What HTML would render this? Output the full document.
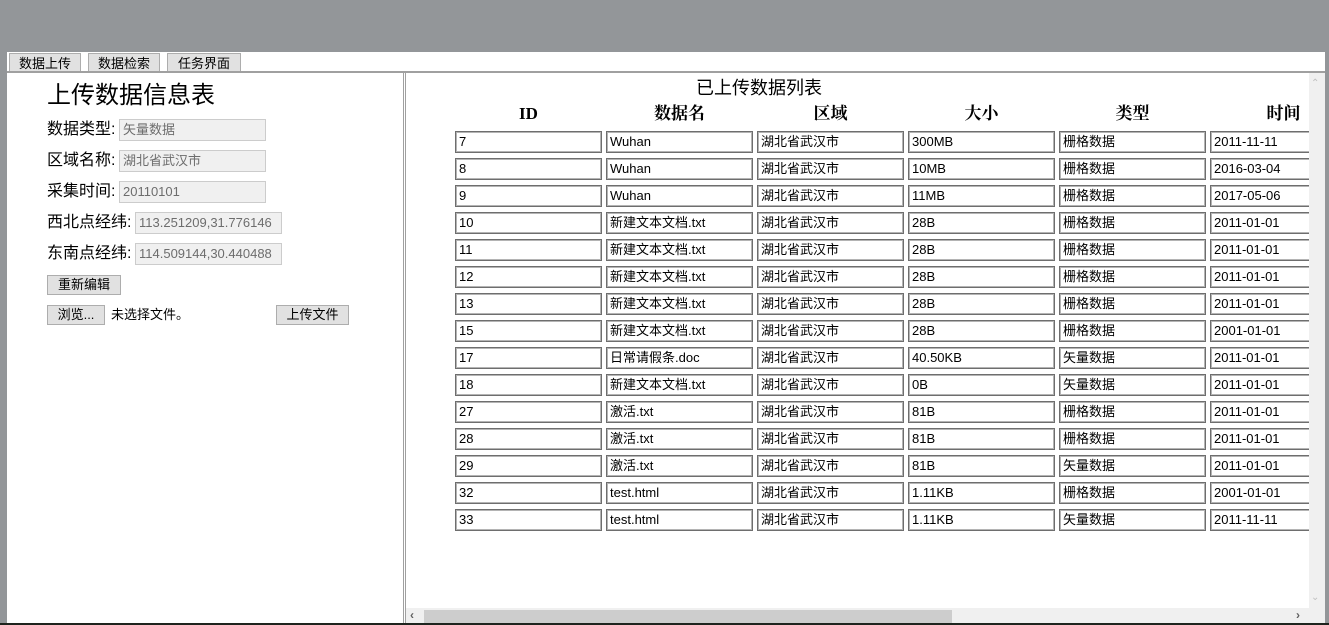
<!DOCTYPE html>
<html><head><meta charset="utf-8"><style>
*{margin:0;padding:0;box-sizing:border-box}
body{width:1329px;height:625px;overflow:hidden;background:#939699;position:relative;font-family:"Liberation Sans","Noto Sans CJK SC",sans-serif;color:#000}
.abs{position:absolute}
.page{left:7px;top:52px;width:1318px;height:571px;background:#fff}
.tab{top:53px;height:20px;background:#e1e1e1;border:1px solid #adadad;border-bottom:none;font-size:13px;line-height:19px;text-align:center}
.lbl{font-size:16px;left:47px;line-height:22px}
.inp{height:22px;background:#f0f0f0;border:1px solid #ccc;font-size:13px;color:#6d6d6d;line-height:20px;padding-left:3px}
.btn{height:20px;background:#e1e1e1;border:1px solid #adadad;font-size:13px;line-height:18px;text-align:center}
.grid{display:grid;grid-template-columns:repeat(6,147px);column-gap:4px;row-gap:5px;grid-auto-rows:22px}
.grid div{border:1px solid #6e6e6e;box-shadow:inset 0 0 0 1px #b4b4b4;font-size:13px;line-height:20px;padding-left:3px;white-space:nowrap;overflow:hidden}
.th{top:103px;font-family:"Liberation Serif","Noto Serif CJK SC",serif;font-weight:bold;font-size:17px;line-height:22px;width:151px;text-align:center}
</style></head><body>
<div class="abs page"></div>
<div class="abs tab" style="left:9px;width:72px">数据上传</div>
<div class="abs tab" style="left:88px;width:72px">数据检索</div>
<div class="abs tab" style="left:167px;width:74px">任务界面</div>
<div class="abs" style="left:7px;top:71px;width:1318px;height:2px;background:#a0a0a0"></div>
<div class="abs" style="left:403px;top:73px;width:1px;height:550px;background:#a0a0a0"></div>
<div class="abs" style="left:405px;top:73px;width:1px;height:550px;background:#a0a0a0"></div>

<div class="abs" style="left:47px;top:81px;font-size:24px;line-height:30px">上传数据信息表</div>
<div class="abs lbl" style="top:119px">数据类型:</div>
<div class="abs inp" style="left:119px;top:119px;width:147px">矢量数据</div>
<div class="abs lbl" style="top:150px">区域名称:</div>
<div class="abs inp" style="left:119px;top:150px;width:147px">湖北省武汉市</div>
<div class="abs lbl" style="top:181px">采集时间:</div>
<div class="abs inp" style="left:119px;top:181px;width:147px">20110101</div>
<div class="abs lbl" style="top:212px">西北点经纬:</div>
<div class="abs inp" style="left:135px;top:212px;width:147px">113.251209,31.776146</div>
<div class="abs lbl" style="top:243px">东南点经纬:</div>
<div class="abs inp" style="left:135px;top:243px;width:147px">114.509144,30.440488</div>
<div class="abs btn" style="left:47px;top:275px;width:74px">重新编辑</div>
<div class="abs btn" style="left:47px;top:305px;width:58px">浏览...</div>
<div class="abs" style="left:111px;top:306px;font-size:13px;line-height:18px">未选择文件。</div>
<div class="abs btn" style="left:276px;top:305px;width:73px">上传文件</div>

<div class="abs" style="left:696px;top:77px;font-size:18px;line-height:22px">已上传数据列表</div>
<div class="abs th" style="left:453px">ID</div>
<div class="abs th" style="left:604px">数据名</div>
<div class="abs th" style="left:755px">区域</div>
<div class="abs th" style="left:906px">大小</div>
<div class="abs th" style="left:1057px">类型</div>
<div class="abs th" style="left:1208px">时间</div>

<div class="abs" style="left:406px;top:73px;width:903px;height:535px;overflow:hidden">
<div class="abs grid" style="left:49px;top:58px">
<div>7</div><div>Wuhan</div><div>湖北省武汉市</div><div>300MB</div><div>栅格数据</div><div>2011-11-11</div>
<div>8</div><div>Wuhan</div><div>湖北省武汉市</div><div>10MB</div><div>栅格数据</div><div>2016-03-04</div>
<div>9</div><div>Wuhan</div><div>湖北省武汉市</div><div>11MB</div><div>栅格数据</div><div>2017-05-06</div>
<div>10</div><div>新建文本文档.txt</div><div>湖北省武汉市</div><div>28B</div><div>栅格数据</div><div>2011-01-01</div>
<div>11</div><div>新建文本文档.txt</div><div>湖北省武汉市</div><div>28B</div><div>栅格数据</div><div>2011-01-01</div>
<div>12</div><div>新建文本文档.txt</div><div>湖北省武汉市</div><div>28B</div><div>栅格数据</div><div>2011-01-01</div>
<div>13</div><div>新建文本文档.txt</div><div>湖北省武汉市</div><div>28B</div><div>栅格数据</div><div>2011-01-01</div>
<div>15</div><div>新建文本文档.txt</div><div>湖北省武汉市</div><div>28B</div><div>栅格数据</div><div>2001-01-01</div>
<div>17</div><div>日常请假条.doc</div><div>湖北省武汉市</div><div>40.50KB</div><div>矢量数据</div><div>2011-01-01</div>
<div>18</div><div>新建文本文档.txt</div><div>湖北省武汉市</div><div>0B</div><div>矢量数据</div><div>2011-01-01</div>
<div>27</div><div>激活.txt</div><div>湖北省武汉市</div><div>81B</div><div>栅格数据</div><div>2011-01-01</div>
<div>28</div><div>激活.txt</div><div>湖北省武汉市</div><div>81B</div><div>栅格数据</div><div>2011-01-01</div>
<div>29</div><div>激活.txt</div><div>湖北省武汉市</div><div>81B</div><div>矢量数据</div><div>2011-01-01</div>
<div>32</div><div>test.html</div><div>湖北省武汉市</div><div>1.11KB</div><div>栅格数据</div><div>2001-01-01</div>
<div>33</div><div>test.html</div><div>湖北省武汉市</div><div>1.11KB</div><div>矢量数据</div><div>2011-11-11</div>
</div>
</div>

<div class="abs" style="left:1309px;top:73px;width:16px;height:550px;background:#f0f0f0"></div>
<div class="abs" style="left:1311px;top:78px;font-size:10px;color:#c0c0c0">&#8963;</div>
<div class="abs" style="left:1311px;top:592px;font-size:10px;color:#c0c0c0">&#8964;</div>
<div class="abs" style="left:406px;top:608px;width:903px;height:15px;background:#f0f0f0"></div>
<div class="abs" style="left:424px;top:610px;width:528px;height:13px;background:#cdcdcd"></div>
<div class="abs" style="left:410px;top:608px;font-size:12px;font-weight:bold;color:#606060">&#8249;</div>
<div class="abs" style="left:1296px;top:608px;font-size:12px;font-weight:bold;color:#606060">&#8250;</div>
<div class="abs" style="left:0;top:623px;width:1329px;height:2px;background:#1e241e"></div>
</body></html>
